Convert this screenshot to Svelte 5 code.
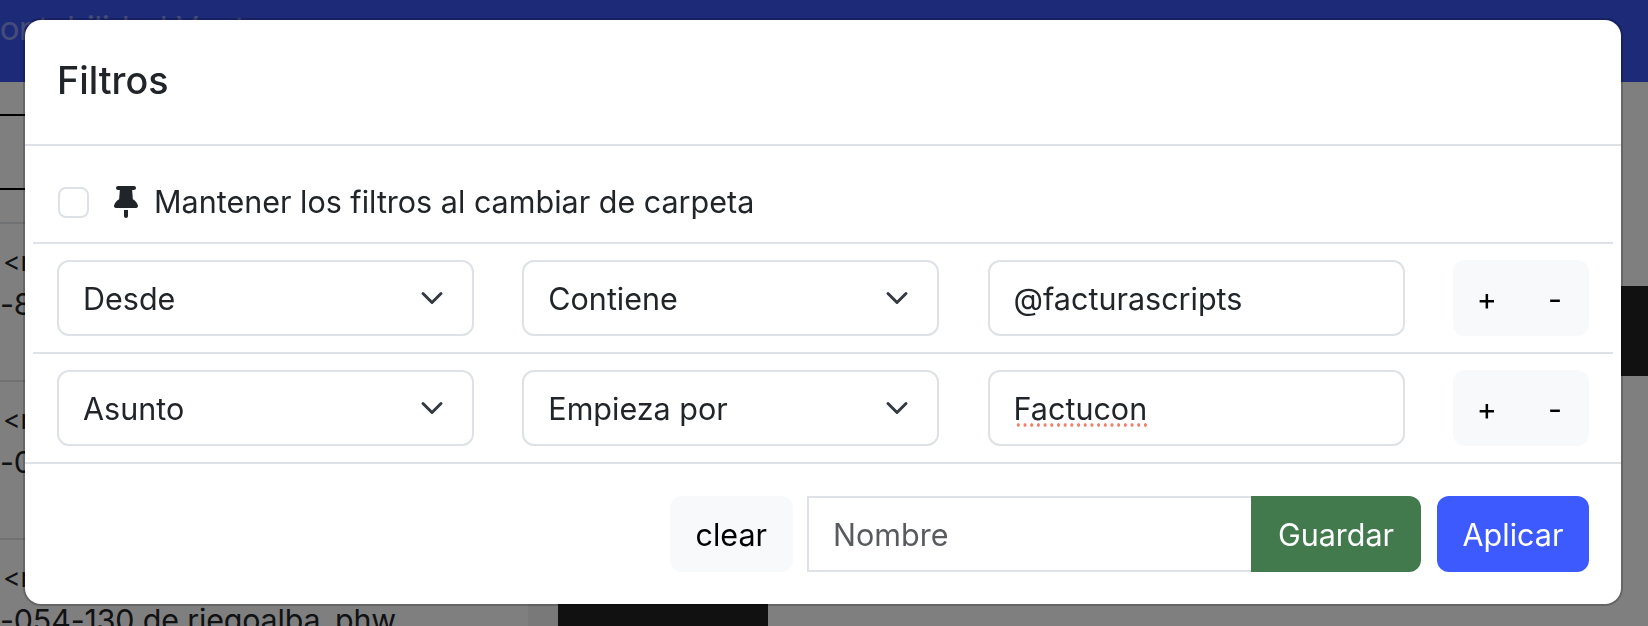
<script>
  const rows = [
    { field: 'Desde', op: 'Contiene', value: '@facturascripts' },
    { field: 'Asunto', op: 'Empieza por', value: 'Factucon', typo: true }
  ];
</script>

<div class="page">
  <header class="navbar"><span>Contabilidad Ventas</span></header>
  <div class="content">
    <div class="list">
      <div class="list-head"></div>
      <div class="list-sub"></div>
      <div class="list-title"></div>
      <div class="mail"><span>&lt;riegoalba@gmail.com&gt;</span><span class="big">-8</span></div>
      <div class="mail"><span>&lt;riegoalba@gmail.com&gt;</span><span class="big">-0</span></div>
      <div class="mail"><span>&lt;riegoalba@gmail.com&gt;</span><span class="big">-054-130 de riegoalba_phw</span></div>
    </div>
    <div class="gutter"></div>
    <div class="side"><div class="dark-bottom"></div></div>
    <div class="dark-right"></div>
  </div>
</div>

<div class="backdrop"></div>

<div class="modal">
  <div class="modal-header"><h5>Filtros</h5></div>
  <div class="modal-body">
    <div class="pin-row">
      <span class="check"></span>
      <svg class="pin" viewBox="0 0 384 512"><path d="M32 32C32 14.3 46.3 0 64 0H320c17.700 0 32 14.300 32 32s-14.300 32-32 32H290.500l11.400 148.200c36.700 19.900 65.700 53.200 79.500 94.700l1 3c3.300 9.800 1.600 20.500-4.400 28.800s-15.700 13.300-26 13.300H32c-10.300 0-19.900-4.900-26-13.300s-7.700-19.100-4.400-28.800l1-3c13.800-41.500 42.800-74.800 79.500-94.700L93.500 64H64C46.300 64 32 49.700 32 32zM160 384h64v96c0 17.700-14.300 32-32 32s-32-14.300-32-32V384z"/></svg>
      <span>Mantener los filtros al cambiar de carpeta</span>
    </div>
    {#each rows as row}
      <div class="filter-row">
        <div class="control select"><span>{row.field}</span><svg viewBox="0 0 16 16"><path d="M2 5l6 6 6-6" /></svg></div>
        <div class="control select"><span>{row.op}</span><svg viewBox="0 0 16 16"><path d="M2 5l6 6 6-6" /></svg></div>
        <div class="control"><span class:typo={row.typo}>{row.value}</span></div>
        <div class="ops"><button>+</button><button>-</button></div>
      </div>
    {/each}
  </div>
  <div class="modal-footer">
    <button class="btn light">clear</button>
    <div class="save-group">
      <div class="name">Nombre</div>
      <button class="btn green">Guardar</button>
    </div>
    <button class="btn blue">Aplicar</button>
  </div>
</div>

<style>
  :global(body) {
    margin: 0;
    font-family: Inter, "Liberation Sans", sans-serif;
    overflow: hidden;
  }
  .page {
    width: 1648px;
    height: 626px;
    overflow: hidden;
    background: #fff;
    color: #212529;
  }
  .navbar {
    height: 82px;
    background: #3a54f0;
    color: #fff;
    font-size: 33px;
    line-height: 56px;
    white-space: nowrap;
    overflow: hidden;
  }
  .navbar span {
    display: block;
    margin-left: -24px;
    letter-spacing: -0.4px;
    opacity: 0.4;
  }
  .content {
    display: flex;
    height: 544px;
  }
  .list {
    width: 528px;
    flex-shrink: 0;
    overflow: hidden;
  }
  .list-head {
    height: 34px;
    box-sizing: border-box;
    border-bottom: 2px solid #000;
  }
  .list-sub {
    height: 74px;
    box-sizing: border-box;
    border-bottom: 2px solid #000;
  }
  .list-title {
    height: 34px;
    box-sizing: border-box;
    border-bottom: 2px solid #dee2e6;
  }
  .mail {
    display: flex;
    flex-direction: column;
    height: 158px;
    border-bottom: 2px solid #dee2e6;
    padding: 21px 0 0 3px;
    box-sizing: border-box;
    font-size: 26.6px;
    line-height: 32px;
    white-space: nowrap;
    overflow: hidden;
  }
  .big {
    font-size: 30.4px;
    line-height: 40px;
    margin-left: -3px;
    margin-top: 7px;
    letter-spacing: -0.15px;
  }
  .gutter {
    width: 30px;
    flex-shrink: 0;
    background: #f2f2f2;
  }
  .side {
    flex: 1;
    display: flex;
    align-items: flex-end;
  }
  .dark-bottom {
    width: 210px;
    height: 22px;
    background: #222;
  }
  .dark-right {
    width: 27px;
    height: 90px;
    margin-top: 204px;
    background: #222;
  }
  .backdrop {
    position: fixed;
    inset: 0;
    background: rgba(0, 0, 0, 0.5);
  }
  .modal {
    position: fixed;
    left: 25px;
    top: 20px;
    width: 1596px;
    height: 584px;
    box-sizing: border-box;
    background: #fff;
    border-radius: 16px;
    box-shadow: 0 0 0 2px rgba(0, 0, 0, 0.2);
    color: #212529;
    font-size: 30.5px;
    display: flex;
    flex-direction: column;
  }
  .modal-header {
    height: 126px;
    box-sizing: border-box;
    border-bottom: 2px solid #dee2e6;
    padding: 38px 32px 0;
  }
  h5 {
    margin: 0;
    font-size: 37.7px;
    font-weight: 500;
    line-height: 1.2;
  }
  .modal-body {
    padding: 0 8px;
  }
  .pin-row {
    display: flex;
    align-items: center;
    height: 96px;
    padding-left: 25px;
    padding-top: 16px;
    box-sizing: border-box;
    line-height: 32px;
  }
  .check {
    width: 31px;
    height: 31px;
    box-sizing: border-box;
    border: 2px solid #dee2e6;
    border-radius: 8px;
  }
  .pin {
    width: 24px;
    height: 32px;
    margin: 0 16px 0 25px;
    fill: #212529;
  }
  .filter-row {
    display: flex;
    align-items: center;
    height: 110px;
    box-sizing: border-box;
    border-top: 2px solid #dee2e6;
    padding: 0 24px;
    gap: 48.3px;
  }
  .control {
    flex: 0 0 417px;
    height: 76px;
    box-sizing: border-box;
    border: 2px solid #dee2e6;
    border-radius: 12px;
    padding: 0 24px;
    display: flex;
    align-items: center;
    justify-content: space-between;
  }
  .select svg {
    width: 24px;
    height: 24px;
    fill: none;
    stroke: #343a40;
    stroke-width: 2;
    stroke-linecap: round;
    stroke-linejoin: round;
    margin-right: 4px;
  }
  .typo {
    background-image: radial-gradient(circle, #f0806a 1.5px, transparent 1.9px);
    background-size: 6.7px 4px;
    background-position: 1px 100%;
    background-repeat: repeat-x;
  }
  .ops {
    display: flex;
    height: 76px;
    width: 136px;
    background: #f8f9fa;
    border-radius: 12px;
  }
  .ops button {
    flex: 1;
    background: none;
    border: none;
    font: inherit;
    color: #000;
    padding: 0;
  }
  .modal-footer {
    border-top: 2px solid #dee2e6;
    flex: 1;
    display: flex;
    align-items: flex-start;
    justify-content: flex-end;
    gap: 14px;
    padding: 32px 32px 0;
  }
  .btn {
    height: 76px;
    border: none;
    font: inherit;
    padding: 0 26px;
    border-radius: 12px;
  }
  .light {
    background: #f8f9fa;
    color: #000;
  }
  .green {
    background: #427a4e;
    color: #fff;
    border-radius: 0 12px 12px 0;
    width: 170px;
    padding: 0;
  }
  .blue {
    background: #3d5afe;
    color: #fff;
    width: 152px;
    margin-left: 2px;
    padding: 0;
  }
  .save-group {
    display: flex;
  }
  .name {
    width: 444px;
    height: 76px;
    box-sizing: border-box;
    border: 2px solid #dee2e6;
    border-right: none;
    padding-left: 24px;
    display: flex;
    align-items: center;
    color: #595c5f;
  }
</style>
